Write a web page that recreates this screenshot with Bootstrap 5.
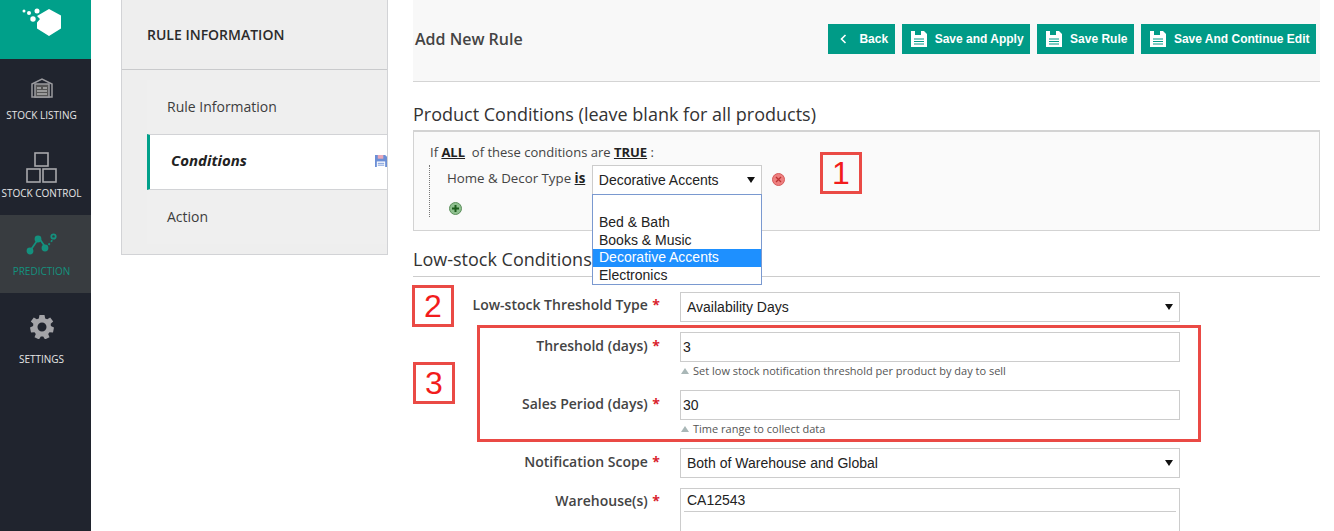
<!DOCTYPE html>
<html lang="en">
<head>
  <meta charset="UTF-8" />
  <title>Add New Rule</title>
  <link href="https://cdn.jsdelivr.net/npm/bootstrap@5.3.3/dist/css/bootstrap.min.css" rel="stylesheet" />
  <style>
    html, body { height: 531px; overflow: hidden; }
    body { font-family: "Open Sans", "Liberation Sans", sans-serif; font-size: 14px; color: #333; background: #fff; width: 1320px; }

    /* left rail */
    .rail { width: 91px; height: 531px; background: #20242e; flex-shrink: 0; }
    .rail-logo { height: 59px; background: #00a08a; padding-right: 8px; }
    .rail-item { height: 78px; color: #e6e6e6; font-size: 10px; line-height: 14px; white-space: nowrap; padding-right: 8px; }
    .rail-item svg { display: block; }
    .rail-item.on { background: #383c40; color: #14917e; }
    .rail-stock { padding-top: 18px; gap: 10px; }
    .rail-control { padding-top: 15px; gap: 3px; }
    .rail-pred { padding-top: 18px; gap: 9px; }
    .rail-set { padding-top: 22px; gap: 13px; }

    /* rule panel */
    .rule-panel { width: 267px; height: 255px; margin-left: 30px; background: #eee; border: 1px solid #d2d3d6; border-top: 0; flex-shrink: 0; }
    .rule-head { height: 70px; padding: 25px 25px 0; border-bottom: 1px solid #c9cacc; font-weight: 600; color: #2b2b2b; line-height: 20px; }
    .rule-tabs { margin: 10px 0 0 25px; }
    .rule-tab { height: 54px; padding: 17px 20px 0; line-height: 20px; color: #3d3d3d; background: #efefef; }
    .rule-tab.on { height: 56px; padding: 15px 0 0 21px; background: #fff; border: 1px solid #d2d3d6; border-width: 1px 0; border-left: 3px solid #00a08a; font-size: 15px; font-style: italic; font-weight: 700; color: #222; }
    .rule-tab.on svg { margin-top: 5px; }

    /* main */
    .main-col { width: 907px; margin-left: 25px; flex-shrink: 0; }
    .top-bar { height: 82px; background: #f8f8f8; border-bottom: 1px solid #d4d4d4; padding: 24px 4px 0 2px; }
    .top-title { font-size: 16px; font-weight: 600; color: #444; line-height: 30px; }
    .act-btn { height: 30px; padding: 0 6.500px 0 9px; background: #009b87; border: 0; border-radius: 0; color: #fff; font: 700 12px/30px "Liberation Sans", Arial, sans-serif; gap: 8px; }
    .act-btn:hover { background: #009b87; color: #fff; }
    .sect-title { font-size: 18px; line-height: 25px; color: #333; margin: 0; font-weight: 400; }
    .prod-title { margin-top: 20px; }
    .cond-box { height: 101px; margin-top: 3px; background: #fafafa; border: 1px solid #d3d3d3; border-top-width: 2px; padding: 11px 16px 0; position: relative; font-size: 13px; line-height: 18px; color: #444; }
    .cond-box b { color: #222; text-decoration: underline; font-weight: 700; }
    .cond-inner { margin: 4px 0 0 -1px; border-left: 1px dotted #777; height: 52px; padding-left: 17px; }
    .cond-type { font-size: 13.300px; margin-top: 4px; }
    .cond-sel { width: 170px; height: 30px; margin-left: 6.500px; border-color: #b5b5b5; }
    .cond-del { margin: 8px 0 0 10px; }
    .cond-add { margin: 7px 0 0 2px; }
    .plain-sel { font: 14px "Liberation Sans", Arial, sans-serif; color: #222; border: 1px solid #ccc; border-radius: 0; padding: 0 6px; background-position: right 6px center; background-size: 8px 6px; background-image: url("data:image/svg+xml,%3Csvg xmlns='http://www.w3.org/2000/svg' viewBox='0 0 8 6'%3E%3Cpath d='M0 0h8L4 6z' fill='%23111'/%3E%3C/svg%3E"); }
    .plain-sel:focus { box-shadow: none; border-color: #ccc; }
    .sel-drop { position: absolute; left: 178px; top: 62px; width: 170px; height: 91px; padding: 19px 0 0; margin: 0; list-style: none; background: #fff; border: 1px solid #7a99d0; font: 14px/17.7px "Liberation Sans", Arial, sans-serif; color: #222; z-index: 3; }
    .sel-drop li { padding-left: 6px; }
    .sel-drop li.on { background: #1e90ff; color: #fff; }
    .low-title { margin-top: 16px; padding-bottom: 4px; border-bottom: 1px solid #ccc; }

    .form-area { position: relative; padding-top: 15px; }
    .f-row { display: flex; align-items: flex-start; }
    .f-label { width: 267px; text-align: right; font-weight: 600; color: #444; line-height: 26px; margin: 0; padding-right: 20px; flex-shrink: 0; }
    .f-label.low { padding-top: 1px; }
    .f-label i { color: #d9232e; font-style: normal; font-weight: 700; margin-left: 1px; }
    .f-ctrl { width: 500px; flex-shrink: 0; }
    .f-field { height: 30px; font: 14px "Liberation Sans", Arial, sans-serif; color: #222; border: 1px solid #ccc; border-radius: 0; padding: 0 2px; }
    .f-field:focus { box-shadow: none; border-color: #ccc; }
    .f-hint { font-size: 11px; line-height: 14px; color: #555; margin-top: 2px; height: 26px; padding-left: 13px; position: relative; }
    .f-hint::before { content: ""; position: absolute; left: 1px; top: 4px; border: 4px solid transparent; border-top: 0; border-bottom: 6px solid #a9b7b7; }
    .ware-box { height: 60px; border: 1px solid #ccc; padding: 2px 3px 0; font: 14px/18px "Liberation Sans", Arial, sans-serif; color: #222; }
    .ware-line { border-bottom: 1px solid #ccc; padding: 0 3px; height: 21px; }

    /* red call-outs laid over the page */
    .note-box { position: absolute; border: 3px solid #ea4a45; color: #f21c1c; font: 32px/36px "Liberation Sans", Arial, sans-serif; text-align: center; width: 42px; height: 42px; z-index: 4; }
    .note-wrap { position: absolute; border: 3px solid #ea4a45; left: 64px; top: 48px; width: 724px; height: 117px; z-index: 2; pointer-events: none; }
  </style>
</head>
<body class="d-flex">
  <div class="rail">
    <div class="rail-logo d-flex justify-content-center">
      <svg width="50" height="38" viewBox="0 0 50 38" fill="#fff">
        <path d="M32 9l12 6.500v13L32 36 20 28.500v-6l3-3.500 -3-3z"/>
        <circle cx="7" cy="11" r="1.500"/><circle cx="12" cy="13" r="2"/><circle cx="20" cy="11" r="2.500"/><circle cx="16" cy="19" r="2.700"/>
      </svg>
    </div>
    <div class="rail-item rail-stock d-flex flex-column align-items-center">
      <svg width="22" height="21" viewBox="0 0 22 21" fill="none" stroke="#9a9a9e" stroke-width="1.500">
        <path d="M1 7l10-5 10 5v13H1z" />
        <path d="M4 7h14v13H4z" fill="#555"/>
        <path d="M6 11h4M12 11h4M6 14h10M6 17h10" stroke="#ddd" stroke-width="1.200"/>
      </svg>
      <span>STOCK LISTING</span>
    </div>
    <div class="rail-item rail-control d-flex flex-column align-items-center">
      <svg width="31" height="31" viewBox="0 0 31 31" fill="none" stroke="#a8a8ac" stroke-width="1.600">
        <rect x="9" y="1" width="13" height="13"/><rect x="1" y="17" width="13" height="13"/><rect x="17" y="17" width="13" height="13"/>
      </svg>
      <span>STOCK CONTROL</span>
    </div>
    <div class="rail-item rail-pred on d-flex flex-column align-items-center">
      <svg width="31" height="22" viewBox="0 0 31 22" fill="none" stroke="#14917e" stroke-width="1.800">
        <path d="M4 18l9-13 7 10"/>
        <path d="M20 15l8-10" stroke-dasharray="2 2"/>
        <circle cx="4" cy="18" r="2.500" fill="#14917e"/><circle cx="12" cy="6" r="2.500" fill="#14917e"/><circle cx="19" cy="15" r="2.500" fill="#14917e"/><circle cx="27.500" cy="3.500" r="2.200"/>
      </svg>
      <span>PREDICTION</span>
    </div>
    <div class="rail-item rail-set d-flex flex-column align-items-center">
      <svg width="24" height="24" viewBox="0 0 24 24" fill="#a4a4a8">
        <path fill-rule="evenodd" d="M9.500 0h5l.7 3.400 2 .9L20.200 2.500l3 4-2.500 2.300.2 2.200 3.100 1.500-1 4.900-3.500-.1-1.300 1.800 1.300 3.200-4.500 2.100-1.800-3h-2.400l-1.800 3-4.500-2.100 1.300-3.200-1.300-1.800-3.500.1-1-4.900L3.100 11l.2-2.200L.8 6.500l3-4 3 1.800 2-.9zM12 7.500a4.500 4.500 0 100 9 4.500 4.500 0 000-9z"/>
      </svg>
      <span>SETTINGS</span>
    </div>
  </div>

  <div class="rule-panel">
    <div class="rule-head">RULE INFORMATION</div>
    <div class="rule-tabs">
      <div class="rule-tab">Rule Information</div>
      <div class="rule-tab on d-flex justify-content-between">
        <span>Conditions</span>
        <svg width="12" height="12" viewBox="0 0 13 13"><path d="M0 0h11l2 2v11H0z" fill="#6c8fd6"/><path d="M3 0h6v4H3z" fill="#e8a8b8"/><path d="M2 7h9v6H2z" fill="#fff"/><path d="M3 9h7M3 11h7" stroke="#6c8fd6"/></svg>
      </div>
      <div class="rule-tab">Action</div>
    </div>
  </div>

  <div class="main-col">
    <div class="top-bar d-flex justify-content-between align-items-start">
      <div class="top-title">Add New Rule</div>
      <div class="d-flex" style="gap: 7px">
        <button class="btn act-btn d-flex align-items-center" type="button">
          <svg width="14" height="12" viewBox="0 0 14 12" fill="none" stroke="#fff" stroke-width="1.600"><path d="M8.500 2L4.500 6l4 4"/></svg>Back</button>
        <button class="btn act-btn d-flex align-items-center" type="button">
          <svg width="16" height="16" viewBox="0 0 16 16"><path d="M0 0h13l3 3v13H0z" fill="#fff"/><path d="M4 0h6v4H4z" fill="#009b87"/><path d="M3 8h10M3 10.500h10M3 13h10" stroke="#009b87"/></svg>Save and Apply</button>
        <button class="btn act-btn d-flex align-items-center" type="button">
          <svg width="16" height="16" viewBox="0 0 16 16"><path d="M0 0h13l3 3v13H0z" fill="#fff"/><path d="M4 0h6v4H4z" fill="#009b87"/><path d="M3 8h10M3 10.500h10M3 13h10" stroke="#009b87"/></svg>Save Rule</button>
        <button class="btn act-btn d-flex align-items-center" type="button">
          <svg width="16" height="16" viewBox="0 0 16 16"><path d="M0 0h13l3 3v13H0z" fill="#fff"/><path d="M4 0h6v4H4z" fill="#009b87"/><path d="M3 8h10M3 10.500h10M3 13h10" stroke="#009b87"/></svg>Save And Continue Edit</button>
      </div>
    </div>

    <h2 class="sect-title prod-title">Product Conditions (leave blank for all products)</h2>
    <div class="cond-box">
      <div>If <b>ALL</b>&nbsp; of these conditions are <b>TRUE</b> :</div>
      <div class="cond-inner">
        <div class="d-flex align-items-start">
          <span class="cond-type">Home &amp; Decor Type <b>is</b></span>
          <select class="form-select plain-sel cond-sel"><option>Decorative Accents</option></select>
          <svg class="cond-del" width="13" height="13" viewBox="0 0 13 13"><circle cx="6.500" cy="6.500" r="6" fill="#ee7f7f" stroke="#d45a5a"/><path d="M4 4l5 5M9 4l-5 5" stroke="#b33" stroke-width="1.300"/></svg>
        </div>
        <svg class="d-block cond-add" width="13" height="13" viewBox="0 0 13 13"><circle cx="6.500" cy="6.500" r="6" fill="#8fc08f" stroke="#5c8f5c"/><path d="M6.500 3v7M3 6.500h7" stroke="#1c5c1c" stroke-width="2"/></svg>
      </div>
      <ul class="sel-drop">
        <li>Bed &amp; Bath</li>
        <li>Books &amp; Music</li>
        <li class="on">Decorative Accents</li>
        <li>Electronics</li>
      </ul>
      <div class="note-box" style="left: 406px; top: 20px">1</div>
    </div>

    <h2 class="sect-title low-title">Low-stock Conditions</h2>
    <div class="form-area">
      <div class="note-box" style="left: -1px; top: 8px">2</div>
      <div class="note-box" style="left: 0; top: 85px">3</div>
      <div class="note-wrap"></div>

      <div class="f-row" style="margin-bottom: 10px">
        <label class="f-label">Low-stock Threshold Type <i>*</i></label>
        <div class="f-ctrl"><select class="form-select plain-sel f-field" style="padding-left: 6px"><option>Availability Days</option></select></div>
      </div>
      <div class="f-row">
        <label class="f-label low">Threshold (days) <i>*</i></label>
        <div class="f-ctrl"><input class="form-control f-field" value="3" /><div class="f-hint">Set low stock notification threshold per product by day to sell</div></div>
      </div>
      <div class="f-row">
        <label class="f-label low">Sales Period (days) <i>*</i></label>
        <div class="f-ctrl"><input class="form-control f-field" value="30" /><div class="f-hint">Time range to collect data</div></div>
      </div>
      <div class="f-row" style="margin-bottom: 10px">
        <label class="f-label low">Notification Scope <i>*</i></label>
        <div class="f-ctrl"><select class="form-select plain-sel f-field" style="padding-left: 6px"><option>Both of Warehouse and Global</option></select></div>
      </div>
      <div class="f-row">
        <label class="f-label">Warehouse(s) <i>*</i></label>
        <div class="f-ctrl"><div class="ware-box"><div class="ware-line">CA12543</div></div></div>
      </div>
    </div>
  </div>

  <script src="https://cdn.jsdelivr.net/npm/bootstrap@5.3.3/dist/js/bootstrap.bundle.min.js"></script>
</body>
</html>
